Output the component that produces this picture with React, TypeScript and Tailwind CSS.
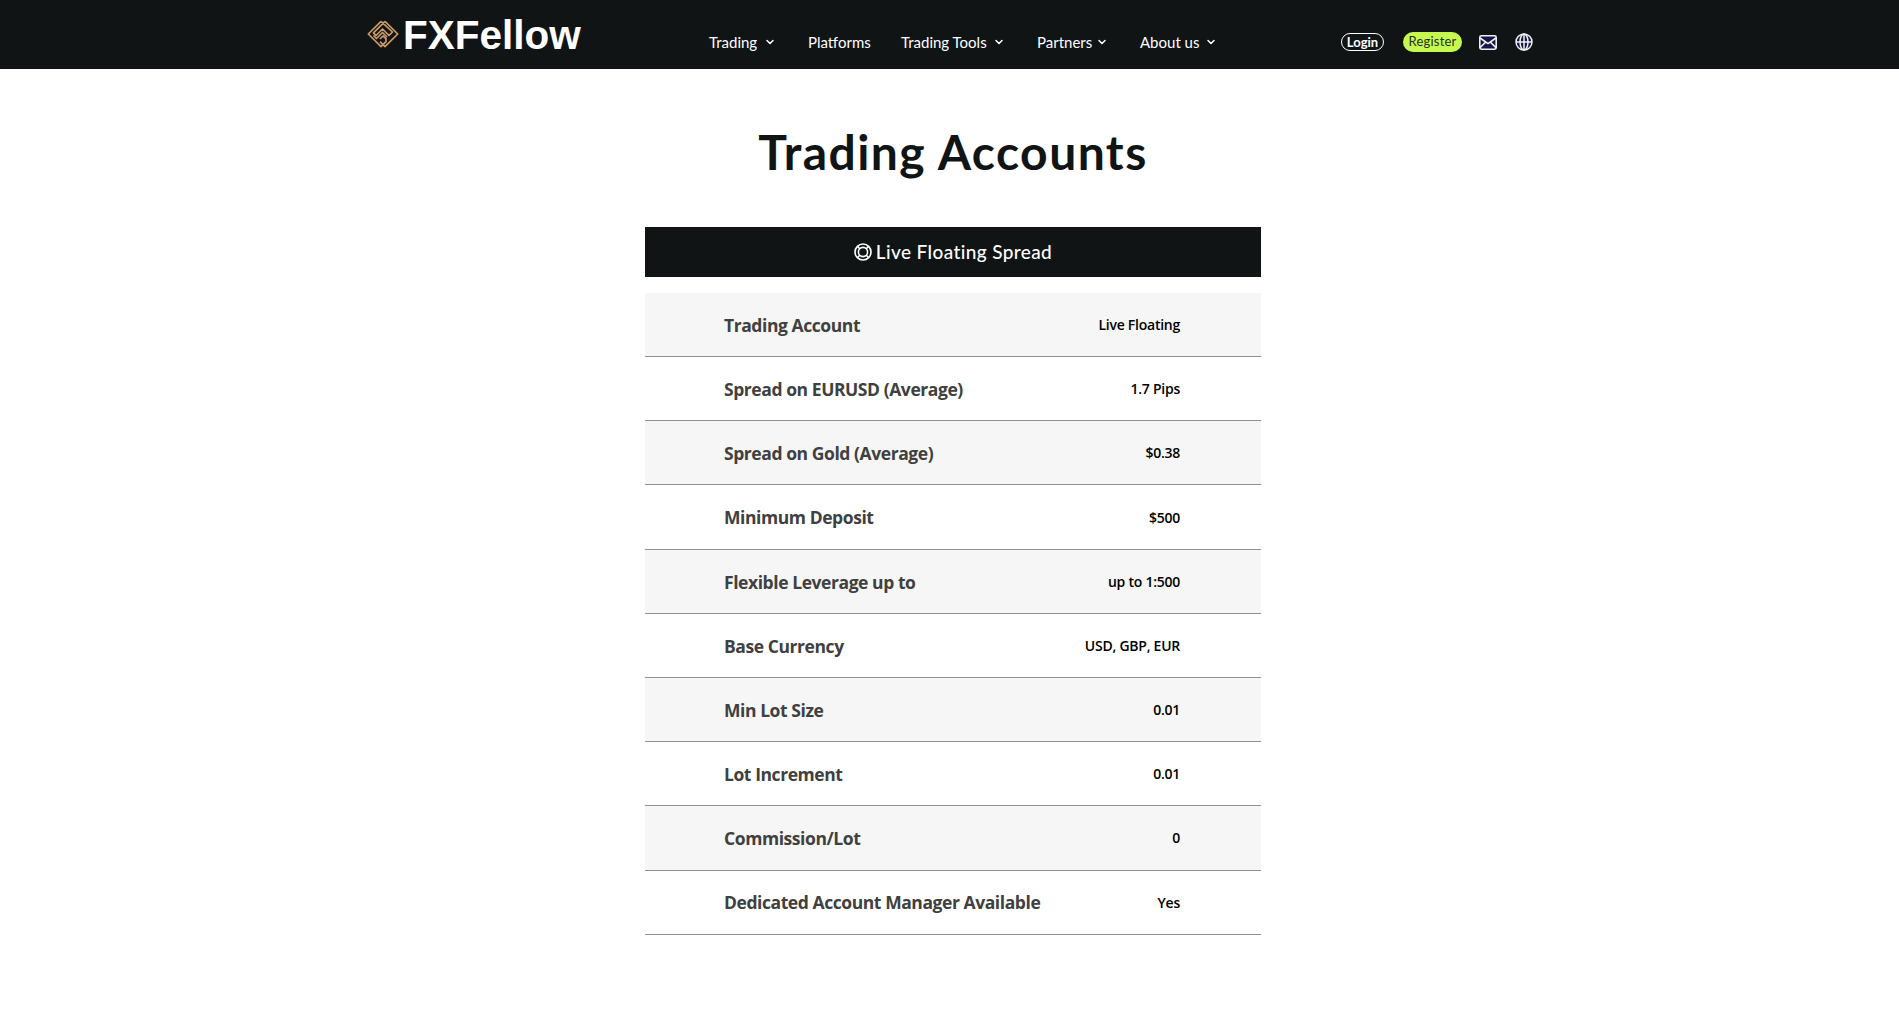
import { ChevronDown } from 'lucide-react';

const navItems = [
  { label: 'Trading', menu: true, width: 'w-[49px]' },
  { label: 'Platforms', menu: false, width: 'w-[61px]' },
  { label: 'Trading Tools', menu: true, width: 'w-[86px]' },
  { label: 'Partners', menu: true, width: 'w-[53px]' },
  { label: 'About us', menu: true, width: 'w-[59px]' },
];

const rows = [
  { label: 'Trading Account', value: 'Live Floating' },
  { label: 'Spread on EURUSD (Average)', value: '1.7 Pips' },
  { label: 'Spread on Gold (Average)', value: '$0.38' },
  { label: 'Minimum Deposit', value: '$500' },
  { label: 'Flexible Leverage up to', value: 'up to 1:500' },
  { label: 'Base Currency', value: 'USD, GBP, EUR' },
  { label: 'Min Lot Size', value: '0.01' },
  { label: 'Lot Increment', value: '0.01' },
  { label: 'Commission/Lot', value: '0' },
  { label: 'Dedicated Account Manager Available', value: 'Yes' },
];

function LogoMark() {
  return (
    <svg className="shrink-0 w-8 h-7" viewBox="0 0 32 28" fill="none" stroke="#c99a68" strokeWidth="1.7" strokeLinejoin="round">
      <path d="M18 1.3 L30.7 14 L18 26.7 L13 21.7 M14 1.3 L1.3 14 L14 26.7 L19 21.7 V18.5 L16 16 L13 19" />
      <path d="M18 1.3 L6.5 12.8 L9 15.5 L15.5 9 L22 15.5 L25.5 12 L14 1.3" />
      <path d="M6.5 15.5 L9.5 18.5 L15.5 12.5 L20 17" />
    </svg>
  );
}

function MailIcon() {
  return (
    <svg className="w-[18px] h-[15px]" viewBox="0 0 18 15" fill="#16164a" stroke="#f1f1f1" strokeWidth="1.6">
      <rect x="0.8" y="0.8" width="16.4" height="13.4" rx="1.6" />
      <path d="M1 3 L9 8.6 L17 3 M1 12.6 L6.5 7.2 M17 12.6 L11.5 7.2" fill="none" />
    </svg>
  );
}

function GlobeIcon() {
  return (
    <svg className="w-[18px] h-[18px]" viewBox="0 0 18 18" fill="none" stroke="#f1f1f1" strokeWidth="1.5">
      <circle cx="9" cy="9" r="8" fill="#16164a" />
      <ellipse cx="9" cy="9" rx="4" ry="8" />
      <path d="M1 9 H17 M9 1 V17" />
    </svg>
  );
}

function LifeBuoyIcon() {
  return (
    <svg className="w-[18px] h-[18px]" viewBox="0 0 18 18" fill="none" stroke="#ffffff" strokeWidth="1.6">
      <circle cx="9" cy="9" r="8" />
      <circle cx="9" cy="9" r="4.6" />
      <path d="M3.4 3.4 L5.8 5.8 M14.6 3.4 L12.2 5.8 M3.4 14.6 L5.8 12.2 M14.6 14.6 L12.2 12.2" />
    </svg>
  );
}

export default function App() {
  return (
    <div className="min-h-screen bg-white font-['Lato',sans-serif]">
      <header className="h-[69px] bg-[#101415] flex items-start">
        <a href="#" className="ml-[367px] mt-[13px] w-[342px] h-[42px] flex items-center text-white">
          <LogoMark />
          <span className="ml-1 pt-0.5 font-['Liberation_Sans',sans-serif] font-bold text-[40.5px] leading-[42px]">FXFellow</span>
        </a>
        <nav className="mt-[31px] w-[632px] h-[22px] flex gap-8 text-white text-[15px] leading-[22px]">
          {navItems.map((item) => (
            <a key={item.label} href="#" className="flex items-center whitespace-nowrap">
              <span className={item.width}>{item.label}</span>
              {item.menu && <ChevronDown className="ml-1.5 w-3 h-3" strokeWidth={3} />}
            </a>
          ))}
        </nav>
        <div className="mt-[31px] h-[22px] flex items-center">
          <a href="#" className="w-[43px] h-[18px] rounded-full border border-white text-white text-[13px] font-bold leading-4 text-center">Login</a>
          <a href="#" className="ml-[19px] w-[59px] h-[20px] rounded-full bg-[#c6f950] text-[#24301c] text-[13px] tracking-[0.2px] leading-[18px] text-center">Register</a>
          <a href="#" className="ml-[17px]"><MailIcon /></a>
          <a href="#" className="ml-[18px]"><GlobeIcon /></a>
        </div>
      </header>

      <main className="ml-[645px] w-[616px]">
        <h1 className="pt-[54px] h-[158px] text-center text-[48px] leading-[58px] tracking-[1.45px] font-bold text-[#101415] whitespace-nowrap">Trading Accounts</h1>
        <div className="h-[50px] pb-px bg-[#101415] text-white flex items-center justify-center gap-1">
          <LifeBuoyIcon />
          <h2 className="text-[19px] leading-6 font-medium tracking-[0.38px]">Live Floating Spread</h2>
        </div>
        <div className="mt-[15.97px] font-['Open_Sans','Noto_Sans',sans-serif]">
          {rows.map((row) => (
            <div key={row.label} className="h-[64.172px] pl-[79px] pr-[81px] flex items-center justify-between border-b border-[#8f9092] odd:bg-[#f6f6f6]">
              <span className="pt-px text-[17.5px] tracking-[-0.43px] font-bold text-[#404040] whitespace-nowrap">{row.label}</span>
              <span className="text-[14px] tracking-[-0.25px] font-semibold text-black whitespace-nowrap">{row.value}</span>
            </div>
          ))}
        </div>
      </main>
    </div>
  );
}
